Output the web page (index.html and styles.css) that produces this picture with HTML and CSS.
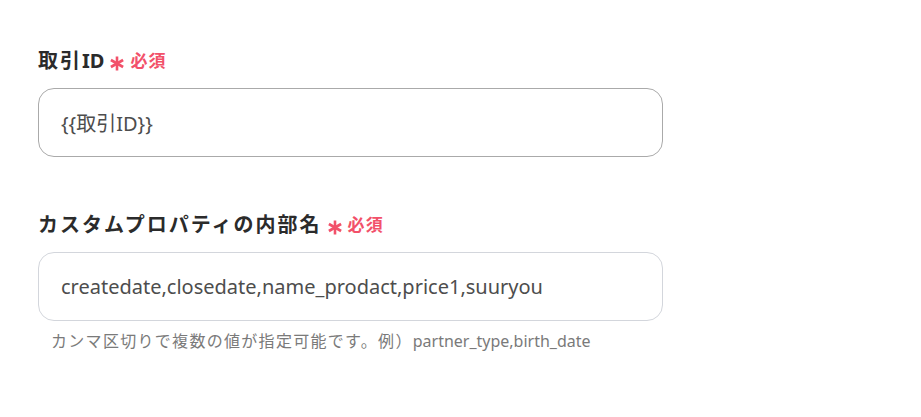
FILE: index.html
```html
<!DOCTYPE html>
<html lang="ja">
<head>
<meta charset="utf-8">
<link rel="stylesheet" href="styles.css">
</head>
<body>
<div class="form">
  <div class="field">
    <div class="label">取引<span class="latin">ID</span><span class="req"><svg class="ast" viewBox="0 0 14 14" aria-hidden="true"><g stroke="#f2516a" stroke-width="2.6" stroke-linecap="butt"><line x1="7" y1="0" x2="7" y2="14"/><line x1="0.9" y1="3.5" x2="13.1" y2="10.5"/><line x1="0.9" y1="10.5" x2="13.1" y2="3.5"/></g></svg>必須</span></div>
    <div class="input input-active">{{取引ID}}</div>
  </div>
  <div class="field field-second">
    <div class="label">カスタムプロパティの内部名<span class="req"><svg class="ast" viewBox="0 0 14 14" aria-hidden="true"><g stroke="#f2516a" stroke-width="2.6" stroke-linecap="butt"><line x1="7" y1="0" x2="7" y2="14"/><line x1="0.9" y1="3.5" x2="13.1" y2="10.5"/><line x1="0.9" y1="10.5" x2="13.1" y2="3.5"/></g></svg>必須</span></div>
    <div class="input">createdate,closedate,name_prodact,price1,suuryou</div>
    <div class="help"><span class="help-ja">カンマ区切りで複数の値が指定可能です。例）</span>partner_type,birth_date</div>
  </div>
</div>
</body>
</html>
```
FILE: styles.css
```css
html, body {
  margin: 0;
  padding: 0;
  background: #ffffff;
}
body {
  font-family: "Noto Sans", "Noto Sans CJK JP", sans-serif;
}
.form {
  padding: 47px 0 0 38px;
  width: 625px;
}
.field {
  display: flex;
  flex-direction: column;
}
.field-second {
  margin-top: 54px;
}
.label {
  display: flex;
  align-items: center;
  font-size: 20px;
  line-height: 28px;
  font-weight: 700;
  letter-spacing: 2px;
  color: #2b2b2b;
  margin-bottom: 13px;
}
.latin {
  letter-spacing: 0;
}
.req {
  display: inline-flex;
  align-items: center;
  color: #f2516a;
  font-size: 17px;
  font-weight: 700;
  letter-spacing: 1.2px;
  margin-left: 6px;
}
.ast {
  width: 14px;
  height: 15px;
  margin-right: 6px;
  position: relative;
  top: 2px;
  flex: none;
}
.input {
  box-sizing: border-box;
  height: 69px;
  border: 1px solid #d3d6dc;
  border-radius: 16px;
  padding: 0 22px;
  display: flex;
  align-items: center;
  font-size: 20px;
  color: #4d4d4d;
}
.input-active {
  border-color: #aaaaaa;
}
.help {
  margin-top: 9px;
  padding-left: 13px;
  font-size: 16px;
  line-height: 22px;
  color: #7a7a7a;
}
.help-ja {
  letter-spacing: 1.3px;
}
```
